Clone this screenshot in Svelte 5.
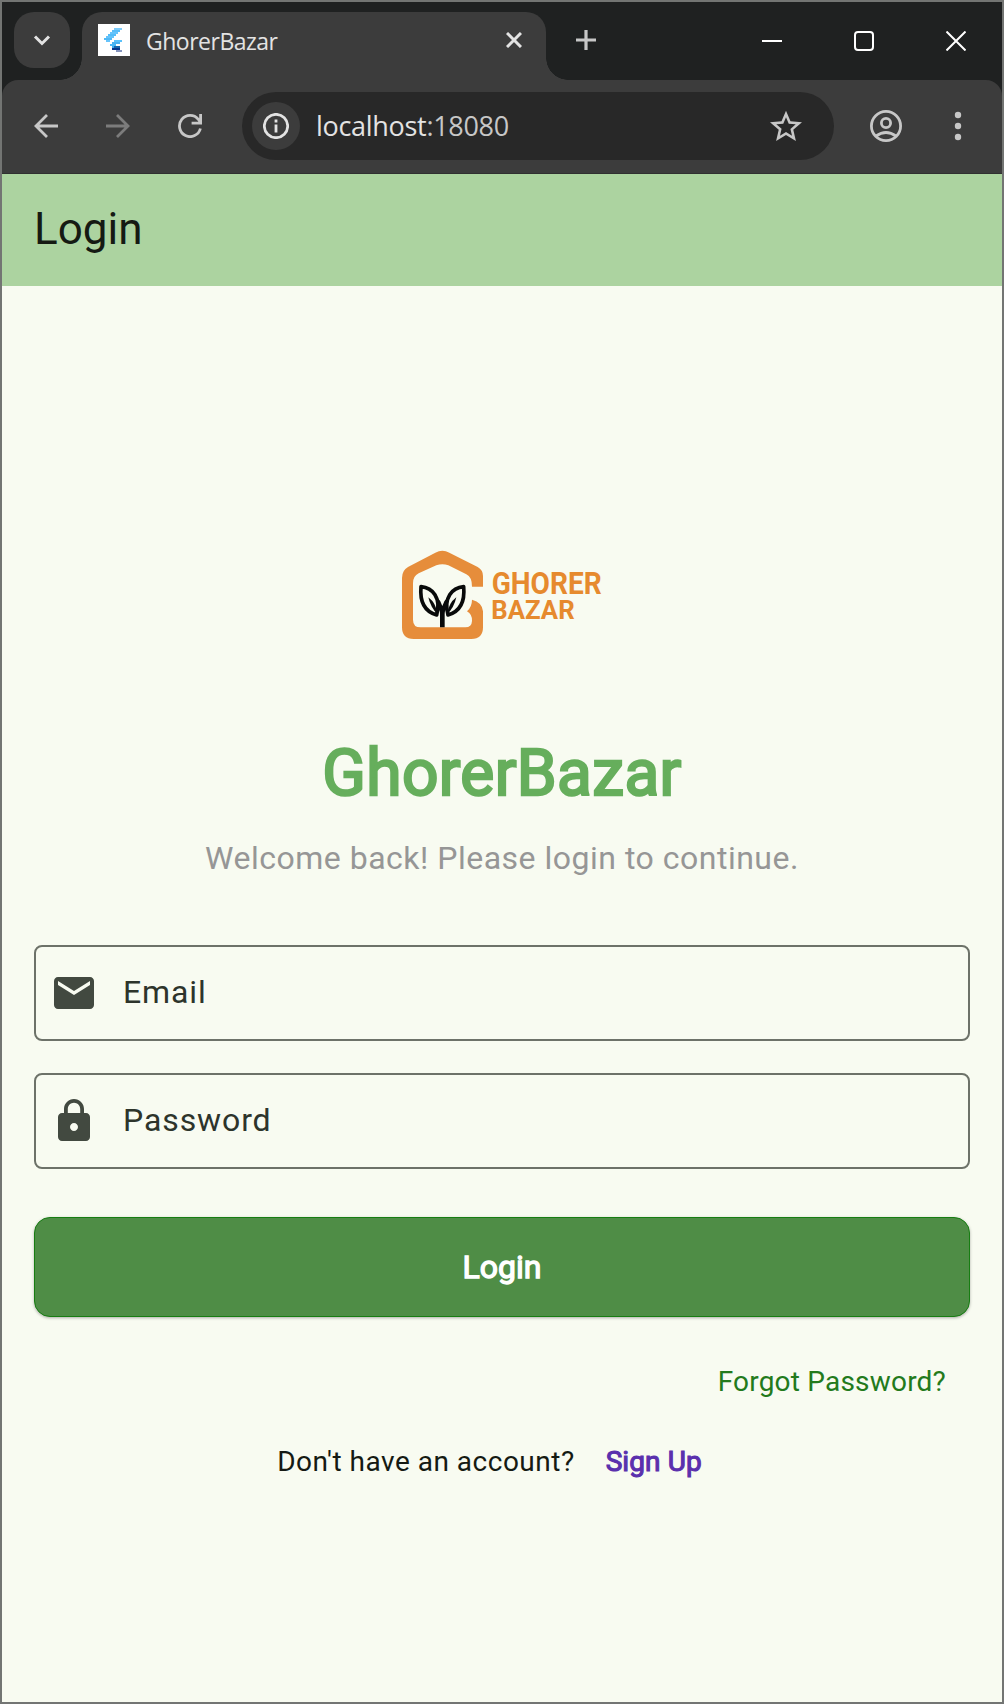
<script>
  let email = $state('');
  let password = $state('');

  // Favicon pixels: [column, row, width, colour] on a 16 x 16 grid
  const pixels = [
    [8, 2, 4, '#7ccbfa'], [7, 3, 4, '#58bdf8'], [6, 4, 4, '#66c4fb'], [5, 5, 4, '#54bdf8'],
    [4, 6, 4, '#64c3fa'], [3, 7, 4, '#50b8f5'], [4, 8, 2, '#67c4fb'], [8, 8, 4, '#5ac1fa'],
    [7, 9, 4, '#49b2ef'], [6, 10, 3, '#48b8f7'], [7, 11, 1, '#3babed'], [8, 11, 3, '#1565a9'],
    [7, 12, 4, '#06358a'], [9, 13, 3, '#8493bd']
  ];
</script>

<div class="window">
  <header class="titlebar">
    <button class="tabsearch" aria-label="Search tabs">
      <svg width="20" height="14" viewBox="0 0 20 14"><path d="M3 3.5 10 10.5 17 3.5" fill="none" stroke="#e3e3e3" stroke-width="3" /></svg>
    </button>
    <div class="tab">
      <svg width="32" height="32" viewBox="0 0 16 16" shape-rendering="crispEdges">
        <rect width="16" height="16" fill="#fff" />
        {#each pixels as [x, y, w, c]}
          <rect {x} {y} width={w} height="1" fill={c} />
        {/each}
      </svg>
      <span class="tabname">GhorerBazar</span>
      <svg width="16" height="16" viewBox="0 0 16 16"><path d="M1 1 15 15M15 1 1 15" stroke="#e3e3e3" stroke-width="3" /></svg>
    </div>
    <svg class="newtab" width="20" height="20" viewBox="0 0 20 20"><path d="M10 0V20M0 10H20" stroke="#c7c7c7" stroke-width="3.2" /></svg>
    <div class="controls">
      <svg width="20" height="20" viewBox="0 0 20 20"><path d="M0 10H20" stroke="#fff" stroke-width="2" /></svg>
      <svg width="20" height="20" viewBox="0 0 20 20"><rect x="1" y="1" width="18" height="18" rx="3" fill="none" stroke="#fff" stroke-width="2" /></svg>
      <svg width="20" height="20" viewBox="0 0 20 20"><path d="M.5.5 19.5 19.5M19.5.5.5 19.5" stroke="#fff" stroke-width="2" /></svg>
    </div>
  </header>

  <nav class="toolbar">
    <svg width="24" height="24" viewBox="0 0 24 24"><path d="M24 12H2M13 1 2 12 13 23" fill="none" stroke="#c7c7c7" stroke-width="2.8" /></svg>
    <svg class="step" width="24" height="24" viewBox="0 0 24 24"><path d="M0 12H22M11 1 22 12 11 23" fill="none" stroke="#7c7c7c" stroke-width="2.8" /></svg>
    <svg class="step" width="24" height="24" viewBox="0 0 24 24"><path d="M22.4 14.500A10.600 10.600 0 1 1 20.300 5.300L22.400 8.200M22.600 0V9.200H13.600" fill="none" stroke="#c7c7c7" stroke-width="2.8" /></svg>
    <div class="omnibox">
      <span class="siteinfo">
        <svg width="26" height="26" viewBox="0 0 26 26"><circle cx="13" cy="13" r="11.7" fill="none" stroke="#e3e3e3" stroke-width="2.7" /><path d="M13 11.500V19.500M13 6.600V9.400" stroke="#e3e3e3" stroke-width="2.8" /></svg>
      </span>
      <span class="url">localhost<span class="port">:18080</span></span>
      <svg width="32" height="32" viewBox="2 1.600 20 20"><path fill="#c7c7c7" d="M22 9.240l-7.190-.62L12 2 9.190 8.630 2 9.240l5.460 4.730L5.820 21 12 17.270 18.180 21l-1.630-7.030L22 9.240zM12 15.400l-3.760 2.270 1-4.280-3.320-2.880 4.380-.38L12 6.100l1.710 4.040 4.380.38-3.320 2.880 1 4.280L12 15.400z" /></svg>
    </div>
    <svg class="profile" width="32" height="32" viewBox="0 0 32 32">
      <g fill="none" stroke="#c7c7c7" stroke-width="2.8"><circle cx="16" cy="16" r="14.6" /><circle cx="16" cy="13" r="4.6" /><path d="M6 26Q16 19 26 26" /></g>
    </svg>
    <svg class="menu" width="8" height="30" viewBox="0 0 8 30" fill="#c7c7c7"><circle cx="4" cy="4" r="3.2" /><circle cx="4" cy="15" r="3.2" /><circle cx="4" cy="26" r="3.2" /></svg>
  </nav>

  <div class="appbar">Login</div>

  <main>
    <svg class="logo" width="200" height="110" viewBox="36 0 600 330">
      <path fill="#e68d3b" d="M279 140V108Q279 90 263 81L178 38Q157 27 136 38L54 81Q36 91 36 114V262Q36 297 71 297H244Q279 297 279 262V214Q277 187 246 179Q246 200 231 214Q247 223 246 243Q245 262 226 262H92Q69 262 69 239V130Q69 108 86 100L139 76Q157 69 175 76L229 103Q246 111 246 140Z" />
      <g fill="none" stroke="#080a0a" stroke-width="11" stroke-linejoin="round">
        <path d="M93 140C128 143 154 174 140 225C101 214 89 184 93 140Z" />
        <path d="M221 140C186 143 160 174 174 225C213 214 225 184 221 140Z" />
      </g>
      <g fill="#080a0a">
        <path d="M115 172Q139 190 142 222Q122 203 115 172Z" />
        <path d="M199 172Q175 190 172 222Q192 203 199 172Z" />
        <path d="M140 170Q153 182 157 198Q161 182 174 170L173 205Q164 208 164 222V262H150V222Q150 208 141 205Z" />
      </g>
      <g class="wordmark">
        <text x="305" y="162" font-size="95" textLength="330" lengthAdjust="spacingAndGlyphs">GHORER</text>
        <text x="304" y="237" font-size="80" textLength="250" lengthAdjust="spacingAndGlyphs">BAZAR</text>
      </g>
    </svg>
    <h1>GhorerBazar</h1>
    <p class="subtitle">Welcome back! Please login to continue.</p>

    <label class="field">
      <svg width="48" height="48" viewBox="0 0 24 24"><path fill="#424940" d="M20 4H4c-1.100 0-1.990.9-1.990 2L2 18c0 1.100.9 2 2 2h16c1.100 0 2-.9 2-2V6c0-1.100-.9-2-2-2zm0 4l-8 5-8-5V6l8 5 8-5v2z" /></svg>
      <input type="email" placeholder="Email" bind:value={email} />
    </label>
    <label class="field">
      <svg width="48" height="48" viewBox="0 0 24 24"><path fill="#424940" d="M18 8h-1V6c0-2.760-2.240-5-5-5S7 3.240 7 6v2H6c-1.100 0-2 .9-2 2v10c0 1.100.9 2 2 2h12c1.100 0 2-.9 2-2V10c0-1.100-.9-2-2-2zm-6 9c-1.100 0-2-.9-2-2s.9-2 2-2 2 .9 2 2-.9 2-2 2zm3.100-9H8.900V6c0-1.710 1.390-3.100 3.100-3.100s3.100 1.390 3.100 3.100v2z" /></svg>
      <input type="password" placeholder="Password" bind:value={password} />
    </label>

    <button class="submit">Login</button>
    <button class="forgot">Forgot Password?</button>
    <div class="signup">
      <span>Don't have an account?</span>
      <button>Sign Up</button>
    </div>
  </main>
</div>

<style>
  :global(body) { margin: 0; background: #f8fbf1; }
  * { box-sizing: border-box; }
  svg { display: block; flex: none; }
  button { border: 0; padding: 0; background: none; font: inherit; color: inherit; }

  .window {
    display: flex;
    flex-direction: column;
    width: 1004px;
    height: 1704px;
    border: 2px solid #737573;
    background: #f8fbf1;
    font-family: Roboto, sans-serif;
    overflow: hidden;
  }

  /* The title bar runs 16px under the toolbar's rounded top corners */
  .titlebar {
    display: flex;
    height: 94px;
    margin-bottom: -16px;
    padding: 10px 36px 16px 12px;
    background: #1f2121;
  }
  .tabsearch {
    display: grid;
    place-items: center;
    width: 56px;
    height: 56px;
    border-radius: 20px;
    background: #3c3c3c;
  }
  .tab {
    position: relative;
    display: flex;
    align-items: center;
    width: 464px;
    height: 68px;
    margin-left: 12px;
    padding: 0 24px 12px 16px;
    border-radius: 20px 20px 0 0;
    background: #3c3c3c;
  }
  .tab::before, .tab::after {
    content: '';
    position: absolute;
    bottom: 0;
    width: 22px;
    height: 22px;
  }
  .tab::before { left: -22px; background: radial-gradient(circle at 0 0, transparent 21.5px, #3c3c3c 22px); }
  .tab::after { right: -22px; background: radial-gradient(circle at 100% 0, transparent 21.5px, #3c3c3c 22px); }
  .tabname {
    flex: 1;
    margin-left: 16px;
    padding-top: 2px;
    font: 23px/32px 'Open Sans', sans-serif;
    letter-spacing: -0.5px;
    color: #e3e3e3;
  }
  .newtab { margin: 18px 0 0 30px; }
  .controls { display: flex; gap: 72px; margin: 19px 0 0 auto; }

  .toolbar {
    position: relative;
    display: flex;
    align-items: center;
    height: 94px;
    padding: 0 40px 2px 32px;
    border-bottom: 1px solid #303030;
    border-radius: 16px 16px 0 0;
    background: #3c3c3c;
  }
  .step { margin-left: 48px; }
  .omnibox {
    display: flex;
    flex: none;
    align-items: center;
    width: 592px;
    height: 68px;
    margin-left: 40px;
    padding: 0 32px 0 10px;
    border-radius: 34px;
    background: #282828;
  }
  .siteinfo { display: grid; place-items: center; width: 48px; height: 48px; border-radius: 50%; background: #3c3c3c; }
  .url {
    flex: 1;
    margin-left: 16px;
    font: 27px/40px 'Open Sans', sans-serif;
    letter-spacing: -0.3px;
    color: #e3e3e3;
  }
  .port { color: #c7c7c7; }
  .profile { margin-left: 36px; }
  .menu { margin-left: auto; }

  .appbar {
    height: 112px;
    padding-left: 32px;
    background: #acd3a0;
    font-size: 44px;
    line-height: 110px;
    color: #151a13;
  }

  main { display: flex; flex-direction: column; padding: 254px 32px 0; }
  .logo { align-self: center; overflow: visible; }
  .wordmark { fill: #e68a2e; font-weight: 700; }
  h1 {
    margin: 86px 0 0;
    font-size: 64px;
    font-weight: 400;
    line-height: 76px;
    letter-spacing: 0.4px;
    text-align: center;
    color: #66ae5c;
    -webkit-text-stroke: 2.4px #66ae5c;
  }
  .subtitle {
    margin: 23px 0 64px;
    font-size: 32px;
    line-height: 46px;
    letter-spacing: 0.5px;
    text-align: center;
    color: #969696;
  }
  .field {
    display: flex;
    align-items: center;
    height: 96px;
    margin-bottom: 32px;
    padding-left: 14px;
    border: 2px solid #6d7269;
    border-radius: 8px;
  }
  .field input {
    flex: 1;
    margin-left: 25px;
    padding: 0 0 2px;
    border: 0;
    outline: 0;
    background: none;
    font: 32px/48px Roboto, sans-serif;
    letter-spacing: 0.9px;
    color: #2d342b;
  }
  .field input::placeholder { color: #2d342b; opacity: 1; }
  .submit {
    height: 100px;
    margin-top: 16px;
    border: 1px solid #177d12;
    border-radius: 16px;
    background: #4f8d46;
    box-shadow: 0 1px 3px rgb(0 0 0 / 0.3);
    font-size: 32px;
    color: #fff;
    -webkit-text-stroke: 1.3px #fff;
  }
  .forgot {
    align-self: flex-end;
    height: 40px;
    margin: 45px 24px 0 0;
    font-size: 28px;
    line-height: 40px;
    letter-spacing: 0.2px;
    color: #237a1c;
  }
  .signup {
    display: flex;
    justify-content: center;
    gap: 31px;
    margin: 40px 25px 0 0;
    font-size: 28px;
    line-height: 40px;
    letter-spacing: 0.5px;
    color: #151a13;
  }
  .signup button { letter-spacing: 0.1px; color: #5a30ad; -webkit-text-stroke: 1.1px #5a30ad; }
</style>
